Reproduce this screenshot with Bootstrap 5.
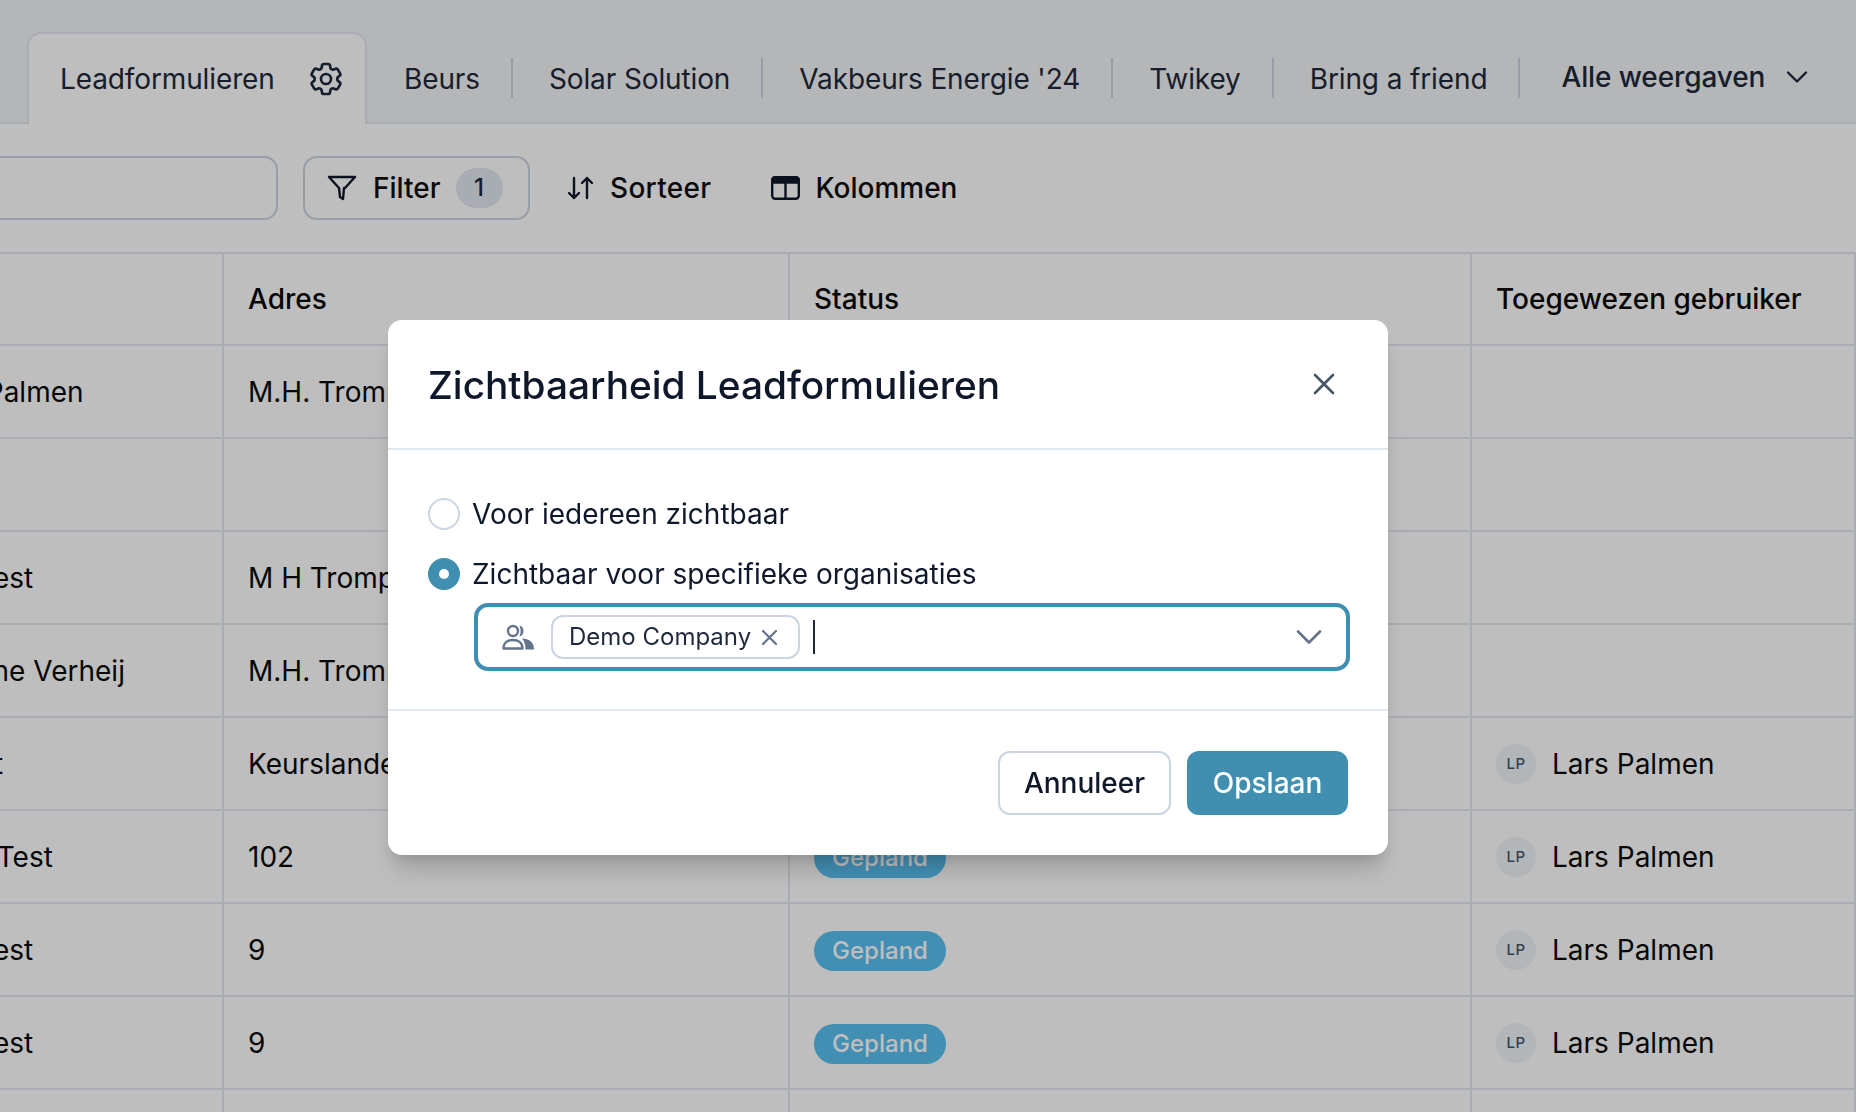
<!DOCTYPE html>
<html lang="nl">
<head>
  <meta charset="UTF-8">
  <meta name="viewport" content="width=device-width, initial-scale=1.0">
  <title>Leadformulieren</title>
  <link href="https://cdn.jsdelivr.net/npm/bootstrap@5.3.2/dist/css/bootstrap.min.css" rel="stylesheet">
  <style>
    html, body { height: 100%; }
    body {
      font-family: Inter, "Liberation Sans", sans-serif;
      font-size: 28px;
      line-height: 40px;
      color: #0f0f12;
      background: #fff;
      overflow: hidden;
    }
    .tab-strip { height: 124px; background: #f3f4f6; border-bottom: 2px solid #e2e8f0; padding-left: 27px; letter-spacing: -.12px; }
    .tab-active {
      height: 92px;
      width: 340px;
      margin: 0 1px -2px 0;
      padding: 0 19px 0 31px;
      background: #fff;
      border: 2px solid #e2e8f0;
      border-bottom: 0;
      border-radius: 14px 14px 0 0;
      color: #1e293b;
    }
    .tab-item { height: 40px; padding: 0 31px 0 36px; margin-top: 58px; line-height: 42px; border-right: 2px solid #cbd5e1; color: #1e293b; }
    .tab-item:hover { color: #1e293b; }
    .tab-views { margin: 57px 0 0 41px; font-weight: 500; color: #1e293b; gap: 21px; }
    .tool-row { height: 128px; padding-top: 32px; }
    .search-box { width: 278px; height: 64px; border: 2px solid #cbd5e1; border-left: 0; border-radius: 0 14px 14px 0; }
    .filter-btn {
      width: 227px;
      height: 64px;
      margin-left: 25px;
      padding: 0 0 0 22px;
      border: 2px solid #cbd5e1;
      border-radius: 14px;
      font-weight: 500;
    }
    .filter-count { width: 47px; height: 40px; margin-left: 15px; border-radius: 20px; background: #e2e8f0; font-weight: 500; color: #1e293b; font-size: 24px; }
    .tool-btn { font-weight: 500; height: 64px; }
    .sort-btn { margin-left: 37px; letter-spacing: .3px; }
    .col-btn { margin-left: 60px; }
    .col-btn svg { margin-right: 15px; }
    .lead-wrap { height: 860px; overflow: hidden; }
    .lead-table {
      table-layout: fixed;
      width: 1959px;
      margin: 0 0 0 -103px;
      border-top: 2px solid #e2e8f0;
      --bs-table-color: #0a0a0c;
      --bs-table-bg: transparent;
    }
    .lead-table th, .lead-table td {
      height: 93px;
      padding: 0 24px;
      vertical-align: middle;
      white-space: nowrap;
      overflow: hidden;
      border-bottom: 2px solid #e2e8f0;
      border-right: 2px solid #e2e8f0;
    }
    .lead-table th { height: 92px; font-weight: 500; }
    .lead-table td { font-weight: 400; }
    .state-pill { display: inline-block; width: 132px; height: 40px; border-radius: 20px; background: #5ac0f2; color: #fff; text-align: center; font-size: 24px; font-weight: 500; line-height: 40px; }
    .user-dot { width: 40px; height: 40px; border-radius: 50%; background: #f1f5f9; color: #475569; font-size: 15px; font-weight: 500; letter-spacing: .5px; }
    .vis-backdrop { --bs-backdrop-bg: #000; --bs-backdrop-opacity: .255; }
    .vis-modal {
      --bs-modal-width: 1000px;
      --bs-modal-padding: 40px;
      --bs-modal-footer-gap: 16px;
      --bs-modal-border-width: 0;
      --bs-modal-border-radius: 14px;
      --bs-modal-inner-border-radius: 14px;
      --bs-modal-header-border-width: 2px;
      --bs-modal-footer-border-width: 2px;
      --bs-modal-header-border-color: #e2e8f0;
      --bs-modal-footer-border-color: #e2e8f0;
    }
    .vis-dialog { margin: 320px 0 0 388px; }
    .vis-shadow { box-shadow: 0 20px 25px -5px rgba(0,0,0,.16), 0 8px 14px -6px rgba(0,0,0,.14); }
    .vis-head { height: 130px; padding: 0 40px; }
    .vis-title { font-size: 38.8px; font-weight: 500; line-height: 48px; color: #0f172a; margin-top: 1px; }
    .vis-close { margin: 0 13px 0 0; line-height: 0; }
    .vis-body { height: 259px; padding: 48px 40px 0; color: #0f172a; }
    .vis-radio { padding: 0; margin: 0 0 28px; min-height: 32px; line-height: 32px; }
    .vis-radio .form-check-input { width: 32px; height: 32px; margin: 0 12px 0 0; float: none; flex: none; border: 2px solid #cbd5e1; }
    .vis-radio .form-check-input:checked { background-color: #408fb0; border-color: #408fb0; background-size: 70%; }
    .org-select {
      height: 68px;
      margin: -15px -2px 0 46px;
      padding: 0 24px 0 24px;
      border: 4px solid #408fb0;
      border-radius: 14px;
    }
    .org-chip { height: 44px; width: 249px; margin-left: 17px; padding: 0 0 0 16px; border: 2px solid #cbd5e1; border-radius: 12px; font-size: 24px; line-height: 40px; color: #1e293b; }
    .org-chip svg { margin-right: 20px; }
    .org-caret { width: 2px; height: 34px; margin-left: 13px; background: #1e293b; }
    .vis-btn { height: 64px; padding: 0; font-size: 28px; font-weight: 500; line-height: 1; border-radius: 12px; }
    .btn-cancel { width: 173px; background: #fff; border: 2px solid #cbd5e1; color: #0f172a; }
    .btn-save { width: 161px; background: #408fb0; border: 0; color: #fff; }
    .btn-save:hover { background: #408fb0; color: #fff; }
  </style>
</head>
<body>
  <div class="tab-strip d-flex align-items-start">
    <div class="tab-active d-flex align-items-center justify-content-between mt-auto">
      <span>Leadformulieren</span>
      <svg width="40" height="40" viewBox="0 0 24 24" fill="none" stroke="#1e293b" stroke-width="1.6" stroke-linecap="round" stroke-linejoin="round"><path d="M9.594 3.94c.09-.542.56-.94 1.11-.94h2.593c.55 0 1.02.398 1.11.94l.213 1.281c.063.374.313.686.645.87.074.04.147.083.22.127.325.196.72.257 1.075.124l1.217-.456a1.125 1.125 0 0 1 1.37.49l1.296 2.247a1.125 1.125 0 0 1-.26 1.431l-1.003.827c-.293.241-.438.613-.43.992a7.723 7.723 0 0 1 0 .255c-.008.378.137.75.43.991l1.004.827c.424.35.534.955.26 1.43l-1.298 2.247a1.125 1.125 0 0 1-1.369.491l-1.217-.456c-.355-.133-.75-.072-1.076.124a6.47 6.47 0 0 1-.22.128c-.331.183-.581.495-.644.869l-.213 1.281c-.09.543-.56.94-1.11.94h-2.594c-.55 0-1.019-.398-1.11-.94l-.213-1.281c-.062-.374-.312-.686-.644-.87a6.52 6.52 0 0 1-.22-.127c-.325-.196-.72-.257-1.076-.124l-1.217.456a1.125 1.125 0 0 1-1.369-.49l-1.297-2.247a1.125 1.125 0 0 1 .26-1.431l1.004-.827c.292-.24.437-.613.43-.991a6.932 6.932 0 0 1 0-.255c.007-.38-.138-.751-.43-.992l-1.004-.827a1.125 1.125 0 0 1-.26-1.43l1.297-2.247a1.125 1.125 0 0 1 1.37-.491l1.216.456c.356.133.751.072 1.076-.124.072-.044.146-.086.22-.128.332-.183.582-.495.644-.869l.214-1.28Z"/><path d="M15 12a3 3 0 1 1-6 0 3 3 0 0 1 6 0Z"/></svg>
    </div>
    <a class="tab-item text-decoration-none" href="#">Beurs</a>
    <a class="tab-item text-decoration-none" href="#">Solar Solution</a>
    <a class="tab-item text-decoration-none" href="#">Vakbeurs Energie '24</a>
    <a class="tab-item text-decoration-none" href="#">Twikey</a>
    <a class="tab-item text-decoration-none" href="#">Bring a friend</a>
    <div class="tab-views d-flex align-items-center">
      <span>Alle weergaven</span>
      <svg width="22" height="14" viewBox="0 0 22 14" fill="none" stroke="#1e293b" stroke-width="2.4" stroke-linecap="round" stroke-linejoin="round"><path d="M2 2.500l9 9 9-9"/></svg>
    </div>
  </div>

  <div class="tool-row d-flex align-items-start">
    <div class="search-box"></div>
    <div class="filter-btn d-flex align-items-center">
      <svg class="me-3" width="30" height="26" viewBox="0 0 30 26" fill="none" stroke="#0f172a" stroke-width="2.4" stroke-linejoin="round"><path d="M2 2h26L18 13l-1 0v0l-1 11-3-2-1-9z"/></svg>
      <span>Filter</span>
      <span class="filter-count d-flex align-items-center justify-content-center">1</span>
    </div>
    <div class="tool-btn sort-btn d-flex align-items-center">
      <svg class="me-3" width="27" height="24" viewBox="0 0 27 24" fill="none" stroke="#0f172a" stroke-width="2.4" stroke-linecap="round" stroke-linejoin="round"><path d="M7 2v20M2 17l5 5 5-5M20 22V2M15 7l5-5 5 5"/></svg>
      <span>Sorteer</span>
    </div>
    <div class="tool-btn col-btn d-flex align-items-center">
      <svg width="29" height="24" viewBox="0 0 29 24" fill="none" stroke="#0f172a" stroke-width="2.4"><rect x="1.200" y="1.200" width="26.600" height="21.600" rx="3"/><path d="M14.500 7v16"/><path d="M1.200 4.200a3 3 0 0 1 3-3h20.600a3 3 0 0 1 3 3V6.500H1.200z" fill="#0f172a"/></svg>
      <span>Kolommen</span>
    </div>
  </div>

  <div class="lead-wrap">
    <table class="table lead-table mb-0">
      <colgroup>
        <col style="width:326px"><col style="width:566px"><col style="width:682px"><col>
      </colgroup>
      <thead>
        <tr><th>Naam</th><th>Adres</th><th>Status</th><th>Toegewezen gebruiker</th></tr>
      </thead>
      <tbody>
        <tr><td>Lars Palmen</td><td>M.H. Trompstraat 14</td><td></td><td></td></tr>
        <tr><td></td><td></td><td></td><td></td></tr>
        <tr><td>Jan Test</td><td>M H Trompstraat 14</td><td></td><td></td></tr>
        <tr><td>Corinne Verheij</td><td>M.H. Trompstraat 14</td><td></td><td></td></tr>
        <tr><td>Kees t</td><td>Keurslanden 3</td><td></td><td><div class="d-flex align-items-center gap-3"><span class="user-dot d-flex align-items-center justify-content-center">LP</span>Lars Palmen</div></td></tr>
        <tr><td>Hans Test</td><td>102</td><td><span class="state-pill">Gepland</span></td><td><div class="d-flex align-items-center gap-3"><span class="user-dot d-flex align-items-center justify-content-center">LP</span>Lars Palmen</div></td></tr>
        <tr><td>Jan Test</td><td>9</td><td><span class="state-pill">Gepland</span></td><td><div class="d-flex align-items-center gap-3"><span class="user-dot d-flex align-items-center justify-content-center">LP</span>Lars Palmen</div></td></tr>
        <tr><td>Jan Test</td><td>9</td><td><span class="state-pill">Gepland</span></td><td><div class="d-flex align-items-center gap-3"><span class="user-dot d-flex align-items-center justify-content-center">LP</span>Lars Palmen</div></td></tr>
        <tr><td></td><td></td><td></td><td></td></tr>
      </tbody>
    </table>
  </div>

  <div class="modal-backdrop show vis-backdrop"></div>
  <div class="modal vis-modal d-block" tabindex="-1">
    <div class="modal-dialog vis-dialog">
      <div class="modal-content vis-shadow">
        <div class="modal-header vis-head">
          <h5 class="modal-title vis-title">Zichtbaarheid Leadformulieren</h5>
          <button type="button" class="btn p-0 border-0 ms-auto vis-close" aria-label="Sluiten">
            <svg width="22" height="22" viewBox="0 0 22 22" fill="none" stroke="#475569" stroke-width="2.600" stroke-linecap="round"><path d="M2 2l18 18M20 2L2 20"/></svg>
          </button>
        </div>
        <div class="modal-body vis-body">
          <div class="form-check vis-radio d-flex align-items-center">
            <input class="form-check-input" type="radio" name="zicht" id="zichtAlle">
            <label class="form-check-label" for="zichtAlle">Voor iedereen zichtbaar</label>
          </div>
          <div class="form-check vis-radio d-flex align-items-center">
            <input class="form-check-input" type="radio" name="zicht" id="zichtOrg" checked>
            <label class="form-check-label" for="zichtOrg">Zichtbaar voor specifieke organisaties</label>
          </div>
          <div class="org-select d-flex align-items-center">
            <svg width="32" height="26" viewBox="0 0 32 26" fill="none" stroke="#64748b" stroke-width="2.400"><circle cx="11" cy="7" r="5"/><path d="M1.500 24.500c0-5.500 4-8.500 9.500-8.500s9.500 3 9.500 8.500z" stroke-linejoin="round"/><path d="M17.500 1.500a5.800 5.800 0 0 1 0 11c1.500-3.500 1.500-7.500 0-11z" fill="#64748b" stroke="none"/><path d="M20 14.500c7 0 12 3.500 12 11H23.500c0-4.500-1-8-3.500-11z" fill="#64748b" stroke="none"/></svg>
            <div class="org-chip d-flex align-items-center">
              <span>Demo Company</span>
              <svg class="ms-auto" width="17" height="17" viewBox="0 0 17 17" fill="none" stroke="#64748b" stroke-width="2.200" stroke-linecap="round"><path d="M2 2l13 13M15 2L2 15"/></svg>
            </div>
            <span class="org-caret"></span>
            <svg class="ms-auto" width="26" height="16" viewBox="0 0 26 16" fill="none" stroke="#64748b" stroke-width="2.600" stroke-linecap="round" stroke-linejoin="round"><path d="M2 2.500l11 11 11-11"/></svg>
          </div>
        </div>
        <div class="modal-footer">
          <button type="button" class="btn vis-btn btn-cancel">Annuleer</button>
          <button type="button" class="btn vis-btn btn-save">Opslaan</button>
        </div>
      </div>
    </div>
  </div>

  <script src="https://cdn.jsdelivr.net/npm/bootstrap@5.3.2/dist/js/bootstrap.bundle.min.js"></script>
</body>
</html>
